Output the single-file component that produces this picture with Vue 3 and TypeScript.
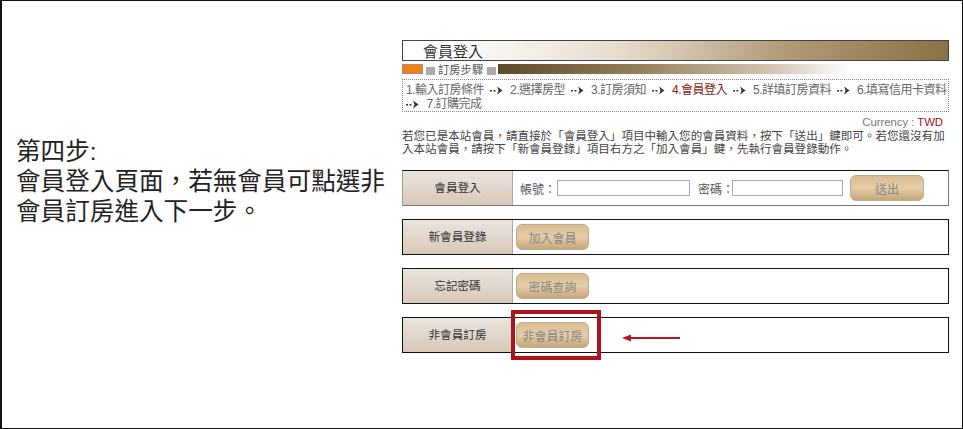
<script setup lang="ts">
const steps = [
  { label: '1.輸入訂房條件', now: false },
  { label: '2.選擇房型', now: false },
  { label: '3.訂房須知', now: false },
  { label: '4.會員登入', now: true },
  { label: '5.詳填訂房資料', now: false },
  { label: '6.填寫信用卡資料', now: false },
]
</script>

<template>
  <div class="frame" lang="zh-Hant">
    <p class="caption">第四步:<br />會員登入頁面，若無會員可點選非<br />會員訂房進入下一步。</p>
    <main class="panel">
      <h1 class="title">會員登入</h1>
      <div class="stepbar">
        <span class="orange"></span>
        <span class="sq"></span>
        <span class="steplabel">訂房步驟</span>
        <span class="sq"></span>
        <span class="fade"></span>
      </div>
      <div class="steps">
        <template v-for="s in steps" :key="s.label">
          <span class="step" :class="{ now: s.now }">{{ s.label }}</span>
          <svg v-if="s.label[0] !== '6'" class="arr" width="13" height="9" viewBox="0 0 13 9">
            <path d="M0 4h2v1.500h-2zM3.500 4h2v1.500h-2z" fill="#333" />
            <path d="M7 .5l5.500 4-5.500 4 1.500-4z" fill="#333" />
          </svg>
        </template>
        <svg class="arr first" width="13" height="9" viewBox="0 0 13 9">
          <path d="M0 4h2v1.500h-2zM3.500 4h2v1.500h-2z" fill="#333" />
          <path d="M7 .5l5.500 4-5.500 4 1.500-4z" fill="#333" />
        </svg>
        <span class="step">7.訂購完成</span>
      </div>
      <div class="currency">Currency : <b>TWD</b></div>
      <p class="intro">若您已是本站會員，請直接於「會員登入」項目中輸入您的會員資料，按下「送出」鍵即可。若您還沒有加入本站會員，請按下「新會員登錄」項目右方之「加入會員」鍵，先執行會員登錄動作。</p>

      <div class="row login">
        <div class="head">會員登入</div>
        <div class="body">
          <label>帳號：</label><input class="field" type="text" />
          <label class="pw">密碼：</label><input class="field short" type="text" />
          <button class="btn send">送出</button>
        </div>
      </div>
      <div class="row">
        <div class="head">新會員登錄</div>
        <div class="body"><button class="btn">加入會員</button></div>
      </div>
      <div class="row">
        <div class="head">忘記密碼</div>
        <div class="body"><button class="btn">密碼查詢</button></div>
      </div>
      <div class="row">
        <div class="head">非會員訂房</div>
        <div class="body">
          <button class="btn">非會員訂房</button>
          <span class="mark"></span>
          <svg class="pointer" width="58" height="10" viewBox="0 0 58 10">
            <path d="M0 5l9-3.500v2.500h49v2h-49v2.500z" fill="#c0141c" />
          </svg>
        </div>
      </div>
    </main>
  </div>
</template>

<style scoped>
.frame {
  box-sizing: border-box;
  width: 963px;
  height: 429px;
  border: 1px solid #111;
  border-left-width: 2px;
  display: flex;
  background: #fff;
  font-family: "Liberation Sans", "Noto Sans CJK TC", sans-serif;
}

.caption {
  width: 400px;
  flex: none;
  box-sizing: border-box;
  margin: 0;
  padding: 136px 0 0 14px;
  font-size: 24.6px;
  line-height: 30px;
  color: #222;
}

.panel {
  width: 547px;
  padding-top: 39px;
}

.title {
  box-sizing: border-box;
  height: 21px;
  margin: 0;
  padding-left: 20px;
  border: 1px solid #444;
  font-size: 15px;
  font-weight: 400;
  line-height: 22px;
  color: #333;
  background: linear-gradient(90deg, #fff 0%, #fff 8%, #e6dccd 40%, #b19b76 70%, #8a7147 100%);
}

.stepbar {
  display: flex;
  align-items: flex-start;
  height: 11px;
  margin-top: 3px;
}

.orange {
  width: 21px;
  height: 10px;
  background: #f08010;
  border: 1px solid #a09080;
  box-sizing: border-box;
}

.sq {
  width: 9px;
  height: 8px;
  background: #aaa;
  margin: 3px 3px 0;
}

.steplabel {
  font-size: 11.3px;
  line-height: 12px;
  color: #555;
  margin-right: 1px;
}

.fade {
  width: 352px;
  height: 10px;
  margin-left: -1px;
  background: linear-gradient(90deg, #5c4a2c 0%, #957f5a 40%, #d5cab7 80%, #fff 100%);
}

.steps {
  box-sizing: border-box;
  display: flex;
  flex-wrap: wrap;
  align-items: center;
  align-content: flex-start;
  height: 33px;
  margin-top: 4px;
  padding: 3px 0 0 3px;
  border: 1px dotted #888;
  font-size: 12px;
  line-height: 14px;
  letter-spacing: -0.5px;
  color: #666;
}

.step {
  white-space: nowrap;
}

.step.now {
  color: #8a1c10;
}

.arr {
  margin: 0 7.5px 0 5.5px;
}

.arr.first {
  margin-left: 0;
}

.currency {
  margin-top: 4px;
  padding-right: 6px;
  text-align: right;
  font-size: 11.3px;
  line-height: 13px;
  color: #777;
}

.currency b {
  font-weight: 400;
  color: #a01020;
}

.intro {
  margin: 1px 0 0;
  font-size: 11.55px;
  line-height: 13px;
  color: #444;
}

.row {
  box-sizing: border-box;
  display: flex;
  height: 36px;
  margin-top: 13px;
  border: 1px solid #111;
}

.row.login {
  margin-top: 14px;
  border-right-color: #777;
  border-bottom-color: #777;
  border-left-color: #999;
}

.head {
  box-sizing: border-box;
  width: 110px;
  flex: none;
  text-align: center;
  line-height: 33px;
  font-size: 11.6px;
  color: #333;
  background: linear-gradient(180deg, #eae5df 0%, #d8c8b8 100%);
  border-right: 1px solid #aaa;
}

.body {
  position: relative;
  display: flex;
  align-items: center;
  padding-left: 3px;
  flex: 1;
  font-size: 12px;
  color: #555;
}

label {
  flex: none;
  white-space: nowrap;
}

.login .body {
  padding-left: 7px;
}

.field {
  box-sizing: border-box;
  flex: none;
  width: 133px;
  height: 16px;
  padding: 0;
  margin-left: 1px;
  border: 1px solid #aaa;
  background: #fff;
}

.field.short {
  width: 111px;
  margin-left: -2px;
}

.pw {
  margin-left: 8px;
}

.btn {
  box-sizing: border-box;
  flex: none;
  width: 73px;
  height: 26px;
  padding: 0;
  border: 1px solid #c0ac88;
  border-radius: 6px;
  background: linear-gradient(180deg, #d9bd92 0%, #e6cda8 50%, #c4a67a 100%);
  font-family: inherit;
  font-size: 12px;
  color: #888;
}

.btn.send {
  width: 74px;
  margin-left: 7px;
}

.mark {
  position: absolute;
  left: -2px;
  top: -8px;
  width: 90px;
  height: 50px;
  box-sizing: border-box;
  border: 4px solid #b0121c;
}

.pointer {
  position: absolute;
  left: 109px;
  top: 15px;
}
</style>

<style>
html,
body {
  margin: 0;
  background: #fff;
}
</style>
